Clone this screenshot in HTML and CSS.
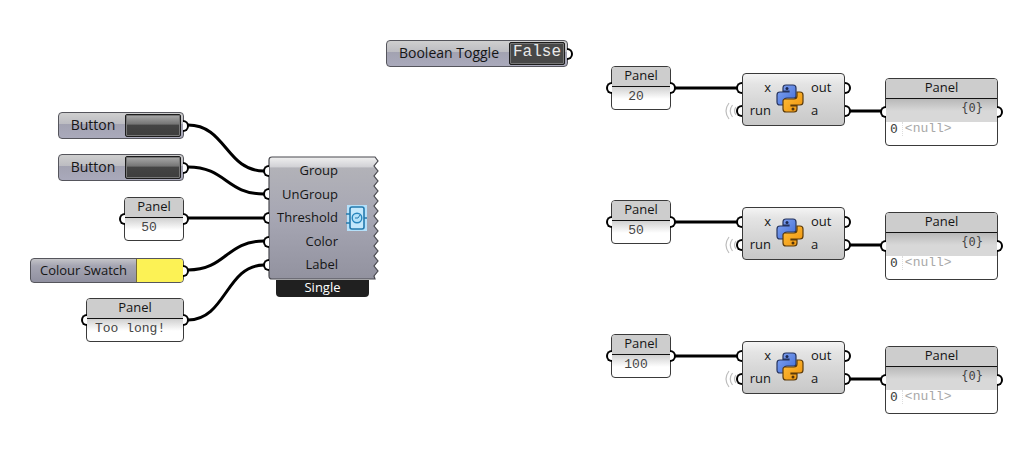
FILE: index.html
```html
<!DOCTYPE html>
<html lang="en">
<head>
<meta charset="utf-8">
<title>Node canvas</title>
<link rel="stylesheet" href="styles.css">
</head>
<body>
<svg class="defs" width="0" height="0" aria-hidden="true">
  <defs>
    <linearGradient id="blue" x1="0" y1="0" x2="1" y2="1"><stop offset="0" stop-color="#86a6f2"/><stop offset="1" stop-color="#3f6cd6"/></linearGradient>
    <linearGradient id="gold" x1="0" y1="0" x2="1" y2="1"><stop offset="0" stop-color="#ffc040"/><stop offset="1" stop-color="#ee9208"/></linearGradient>
    <symbol id="python" viewBox="0 0 28 30">
      <path d="M7 4Q7 1 10 1H17Q20 1 20 4V12Q20 14 18 14H11Q8 14 8 17V21H4Q1 21 1 18V11Q1 8 4 8H13V7H7Z" fill="url(#blue)" stroke="#26345e" stroke-width="1.2"/>
      <path d="M21 8H24Q27 8 27 11V18Q27 21 24 21H15V22H21V25Q21 28 18 28H10Q7 28 7 25V17Q7 15 9 15H18Q21 15 21 12Z" fill="url(#gold)" stroke="#5c3b0a" stroke-width="1.2"/>
      <circle cx="11" cy="4.500" r="1.500" fill="#1c2850"/>
      <circle cx="17" cy="25" r="1.500" fill="#53340a"/>
    </symbol>
    <symbol id="waves" viewBox="0 0 12 18">
      <path d="M4 1Q-2 9 4 17M7.500 3Q3 9 7.500 15M11 5Q8 9 11 13" fill="none" stroke="#bdbdbd" stroke-width="1.200"/>
    </symbol>
  </defs>
</svg>
<main class="canvas">
  <svg class="wires" aria-hidden="true">
    <path d="M188 125C226 125 226 171 264 171"/>
    <path d="M188 167C226 167 226 194 264 194"/>
    <path d="M188 218H264"/>
    <path d="M188 270C226 270 226 241 264 241"/>
    <path d="M188 320C226 320 226 265 264 265"/>
    <path d="M675 88H738M850 111H881M675 222H738M850 245H881M675 356H738M850 379H881"/>
  </svg>

  <section class="node control button-one"><label for="b1">Button</label><button class="push" id="b1" type="button"></button><i class="port out"></i></section>
  <section class="node control button-two"><label for="b2">Button</label><button class="push" id="b2" type="button"></button><i class="port out"></i></section>
  <section class="node panel threshold"><h2>Panel</h2><p>50</p><i class="port in"></i><i class="port out"></i></section>
  <section class="node control colour"><label for="sw">Colour Swatch</label><input class="swatch" id="sw" type="color" value="#fcf255"><i class="port out"></i></section>
  <section class="node panel note"><h2>Panel</h2><p>Too long!</p><i class="port in"></i><i class="port out"></i></section>

  <section class="grouper">
    <div class="body">
      <svg class="shell" viewBox="0 0 111 124" preserveAspectRatio="none" aria-hidden="true">
        <defs><linearGradient id="shell" x1="0" y1="0" x2="0" y2="1"><stop offset="0" stop-color="#f0f0f0"/><stop offset=".08" stop-color="#d2d2d6"/><stop offset=".09" stop-color="#b2b2b8"/><stop offset=".5" stop-color="#a6a6b3"/><stop offset="1" stop-color="#92929f"/></linearGradient></defs>
        <path d="M4 1H107L110 5L106 10L110 15L106 20L110 25L106 30L110 35L106 40L110 45L106 50L110 55L106 60L110 65L106 70L110 75L106 80L110 85L106 90L110 95L106 100L110 105L106 110L110 115L106 120L107 123H4Q1 123 1 120V4Q1 1 4 1Z" fill="url(#shell)" stroke="#48484e" stroke-width="1.200"/>
      </svg>
      <ul class="inputs">
        <li>Group<i class="port in"></i></li>
        <li>UnGroup<i class="port in"></i></li>
        <li>Threshold<i class="port in"></i></li>
        <li>Color<i class="port in"></i></li>
        <li>Label<i class="port in"></i></li>
      </ul>
      <svg class="meter" viewBox="0 0 22 26" aria-hidden="true">
        <rect x="1" width="20" height="26" fill="#b5e0fa"/>
        <rect x="4" y="2" width="14" height="22" rx="2" fill="#c4e8fc" stroke="#2379ad" stroke-width="1.600"/>
        <path d="M0 9H4M0 18H4M18 13H21" stroke="#2379ad" stroke-width="1.500"/>
        <circle cx="11" cy="13" r="4.800" fill="#b5e2fa" stroke="#2886bd" stroke-width="1.400"/>
        <path d="M9 13H12L14 10" fill="none" stroke="#2379ad"/>
      </svg>
    </div>
    <p class="mode">Single</p>
  </section>

  <section class="node control toggle"><label for="bt">Boolean Toggle</label><button class="push value" id="bt" type="button" aria-pressed="false">False</button><i class="port out"></i></section>

  <div class="chain first">
    <section class="node panel source"><h2>Panel</h2><p>20</p><i class="port in"></i><i class="port out"></i></section>
    <section class="node script"><ul class="left"><li>x<i class="port in"></i></li><li>run<svg class="waves" aria-hidden="true"><use href="#waves"/></svg><i class="port in"></i></li></ul><svg class="python" aria-hidden="true"><use href="#python"/></svg><ul class="right"><li>out<i class="port out"></i></li><li>a<i class="port out"></i></li></ul></section>
    <section class="node panel result"><h2>Panel</h2><p class="path">{0}</p><p class="entry"><span>0</span><span class="null">&lt;null&gt;</span></p><i class="port in"></i><i class="port out"></i></section>
  </div>
  <div class="chain second">
    <section class="node panel source"><h2>Panel</h2><p>50</p><i class="port in"></i><i class="port out"></i></section>
    <section class="node script"><ul class="left"><li>x<i class="port in"></i></li><li>run<svg class="waves" aria-hidden="true"><use href="#waves"/></svg><i class="port in"></i></li></ul><svg class="python" aria-hidden="true"><use href="#python"/></svg><ul class="right"><li>out<i class="port out"></i></li><li>a<i class="port out"></i></li></ul></section>
    <section class="node panel result"><h2>Panel</h2><p class="path">{0}</p><p class="entry"><span>0</span><span class="null">&lt;null&gt;</span></p><i class="port in"></i><i class="port out"></i></section>
  </div>
  <div class="chain third">
    <section class="node panel source"><h2>Panel</h2><p>100</p><i class="port in"></i><i class="port out"></i></section>
    <section class="node script"><ul class="left"><li>x<i class="port in"></i></li><li>run<svg class="waves" aria-hidden="true"><use href="#waves"/></svg><i class="port in"></i></li></ul><svg class="python" aria-hidden="true"><use href="#python"/></svg><ul class="right"><li>out<i class="port out"></i></li><li>a<i class="port out"></i></li></ul></section>
    <section class="node panel result"><h2>Panel</h2><p class="path">{0}</p><p class="entry"><span>0</span><span class="null">&lt;null&gt;</span></p><i class="port in"></i><i class="port out"></i></section>
  </div>
</main>
</body>
</html>
```
FILE: styles.css
```css
* { box-sizing: border-box; }
body { margin: 0; background: #fff; color: #151515; font: 13px/20px "Open Sans", "Noto Sans", sans-serif; }
h2, p, ul { margin: 0; padding: 0; font-size: 13px; font-weight: 400; list-style: none; }
.defs { position: absolute; }
.canvas { position: relative; min-height: 100vh; overflow: hidden; }
.wires { position: absolute; inset: 0; width: 100%; height: 100%; fill: none; stroke: #000; stroke-width: 3; }

/* Nodes sit freely on the canvas */
.node, .grouper { position: absolute; }
.node { border: 1px solid #3a3a3a; border-radius: 4px; }
.button-one { left: 58px; top: 112px; width: 126px; }
.button-two { left: 58px; top: 154px; width: 126px; }
.threshold { left: 124px; top: 197px; width: 60px; }
.colour { left: 30px; top: 258px; width: 154px; }
.note { left: 86px; top: 298px; width: 98px; }
.grouper { left: 268px; top: 156px; width: 111px; }
.toggle { left: 386px; top: 40px; width: 182px; }
.chain { position: absolute; left: 611px; display: flex; align-items: flex-start; }
.chain .node { position: relative; }
.first { top: 66px; }
.second { top: 200px; }
.third { top: 334px; }

/* Ports */
.port { position: absolute; top: 50%; width: 6px; height: 12px; margin-top: -6px; border: 2px solid #000; background: #fff; }
.port.in { right: 100%; border-right: 0; border-radius: 6px 0 0 6px; }
.port.out { left: 100%; border-left: 0; border-radius: 0 6px 6px 0; }

/* Label plus control */
.control { display: flex; height: 27px; padding: 1px 2px; border-color: #55555c; background: linear-gradient(#cfcfcf, #bdbdc2 42%, #a2a2b1 43%, #a9a9bb); }
.control label { flex: 1; text-align: center; font-size: 14px; line-height: 22px; }
.push { width: 56px; padding: 0; border: 1px solid #1c1c1c; border-radius: 2px; background: linear-gradient(#aaa, #777 42%, #444 50%, #3d3d3d); font: 16px/16px "Liberation Mono", monospace; color: #e8e8e8; box-shadow: inset 0 0 0 1px #777; }
.value { padding-bottom: 3px; background: #484848; }
.colour { height: 25px; padding: 0; background: linear-gradient(#c4c4c8, #a5a5b2 30%, #9090a0); }
.colour label { font-size: 13px; }
.swatch { width: 47px; height: 100%; padding: 0; border: 0; border-left: 1px solid #766b38; border-radius: 0 3px 3px 0; overflow: hidden; background: none; appearance: none; }
.swatch::-webkit-color-swatch-wrapper { padding: 0; }
.swatch::-webkit-color-swatch { border: 0; }

/* Panels */
.panel { min-height: 44px; background: linear-gradient(#d0d0d0, #fff 12px) 0 20px no-repeat #fff; }
.panel h2 { height: 20px; border-bottom: 1px solid #111; border-radius: 3px 3px 0 0; background: #cdcdcd; text-align: center; line-height: 17px; }
.panel p { font: 13px/20px "Liberation Mono", monospace; color: #444; text-align: center; }
.threshold p, .source p { padding-right: 10px; }
.note p { padding-left: 8px; text-align: left; }
.source { width: 60px; }
.result { width: 113px; height: 68px; margin: 12px 0 0 40px; }
.panel .path { height: 23px; padding: 0 14px; background: linear-gradient(#b8b8b8, #d8d8d8 12px); text-align: right; font: 12px/18px "DejaVu Sans Mono", monospace; }
.panel .entry { display: flex; gap: 4px; padding: 0 4px; line-height: 14px; }
.entry span:first-child { font-family: "DejaVu Sans Mono", monospace; font-size: 13px; }
.entry .null { border-left: 1px dotted #ddd; color: #a8a8a8; padding-left: 2px; }

/* Script component */
.script { display: grid; grid-template-columns: 28px 28px 1fr; column-gap: 5px; align-items: center; width: 103px; margin: 7px 0 0 71px; padding: 2px 0 3px; background: linear-gradient(#f4f4f4, #e4e4e4 20%, #d8d8d8 50%, #c8c8c8); }
.script li { position: relative; height: 23px; line-height: 22px; }
.left { text-align: right; }
.script .port.in { right: calc(100% + 1px); }
.script .port.out { left: calc(100% + 1px); }
.python { width: 28px; height: 30px; }
.right { padding-left: 2px; }
.waves { position: absolute; right: calc(100% + 6px); top: 3px; width: 12px; height: 18px; }

/* Grouping component */
.body { position: relative; height: 124px; padding: 3px 41px 3px 1px; }
.shell { position: absolute; inset: 0; width: 100%; height: 100%; }
.inputs { position: relative; display: grid; grid-template-rows: repeat(5, 1fr); height: 100%; text-align: right; }
.inputs li { position: relative; line-height: 23px; }
.meter { position: absolute; right: 11px; top: 49px; width: 22px; height: 26px; }
.mode { height: 17px; margin: 0 10px 0 8px; border-radius: 0 0 4px 4px; background: #202020; color: #fff; text-align: center; line-height: 14px; }
```
